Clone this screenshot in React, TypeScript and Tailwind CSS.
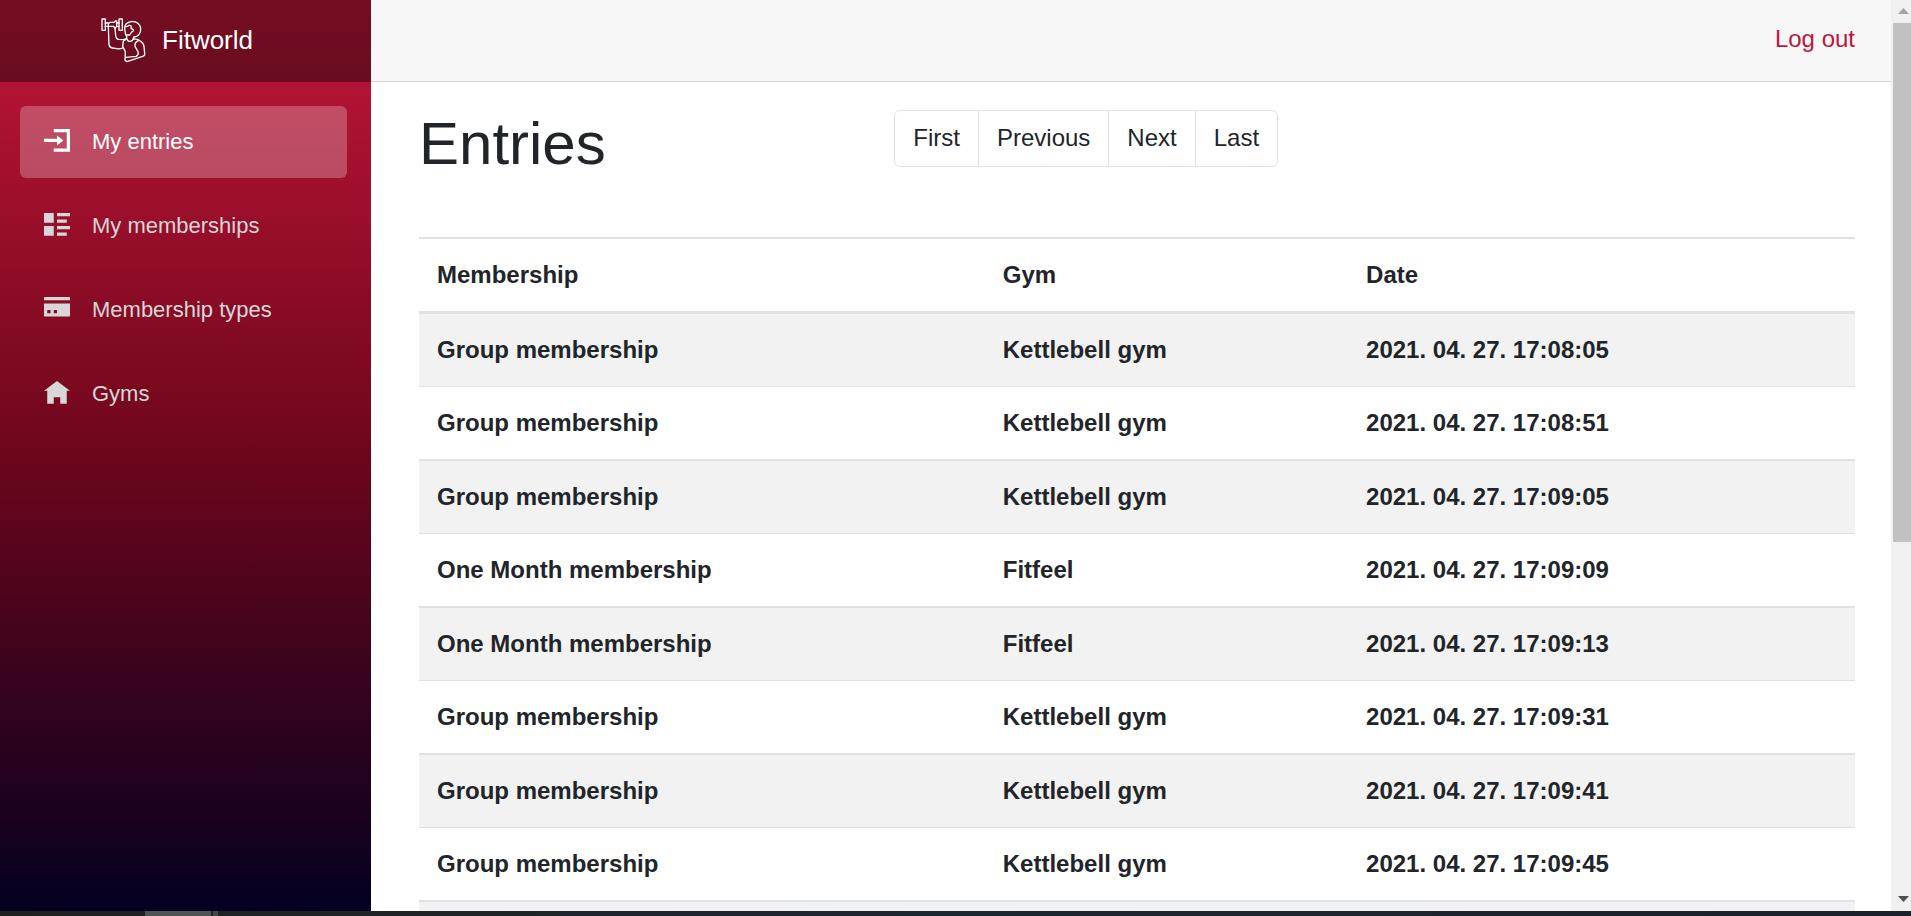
type Entry = { membership: string; gym: string; date: string };

const entries: Entry[] = [
  { membership: "Group membership", gym: "Kettlebell gym", date: "2021. 04. 27. 17:08:05" },
  { membership: "Group membership", gym: "Kettlebell gym", date: "2021. 04. 27. 17:08:51" },
  { membership: "Group membership", gym: "Kettlebell gym", date: "2021. 04. 27. 17:09:05" },
  { membership: "One Month membership", gym: "Fitfeel", date: "2021. 04. 27. 17:09:09" },
  { membership: "One Month membership", gym: "Fitfeel", date: "2021. 04. 27. 17:09:13" },
  { membership: "Group membership", gym: "Kettlebell gym", date: "2021. 04. 27. 17:09:31" },
  { membership: "Group membership", gym: "Kettlebell gym", date: "2021. 04. 27. 17:09:41" },
  { membership: "Group membership", gym: "Kettlebell gym", date: "2021. 04. 27. 17:09:45" },
];

const navItems = [
  { label: "My entries", icon: "M3 0v1h4v5h-4v1h5v-7h-5zm1 2v1h-4v1h4v1l2-1.5-2-1.5z" },
  {
    label: "My memberships",
    icon: "M0 0v3h3v-3h-3zm4 0v1h4v-1h-4zm0 2v1h3v-1h-3zm-4 2v3h3v-3h-3zm4 0v1h4v-1h-4zm0 2v1h3v-1h-3z",
  },
  {
    label: "Membership types",
    icon: "M.25 0c-.14 0-.25.11-.25.25v.75h8v-.75c0-.14-.11-.25-.25-.25h-7.5zm-.25 2v3.75c0 .14.11.25.25.25h7.5c.14 0 .25-.11.25-.25v-3.75h-8zm1 2h1v1h-1v-1zm2 0h1v1h-1v-1z",
  },
  { label: "Gyms", icon: "M4 0l-4 3h1v4h2v-2h2v2h2v-4.03l1 .03-4-3z" },
];

const pages = ["First", "Previous", "Next", "Last"];

function Logo() {
  return (
    <svg
      viewBox="30 33 144 144"
      className="size-12 shrink-0"
      fill="none"
      stroke="currentColor"
      strokeWidth="4"
      strokeLinejoin="round"
      strokeLinecap="round"
      aria-hidden="true"
    >
      <path d="M36 42h10v34h-10zM87 42h10v34h-10z" />
      <path d="M46 54h9M46 64h9M80 54h7M80 64h7" />
      <path d="M55 66v-10l5-4h12l4-4h4v16l-5 6l-4-6h-16" />
      <path d="M55 66l2 52q1 10 10 11l14 2q8 2 17-2" />
      <path d="M75 70l2 21q1 11 9 12l16 1l8-4v-8" />
      <path d="M104 72q-2-19 22-23q22 1 26 20q1 18-12 25l-8 2" />
      <path d="M104 72l3 18h12l6-9q7-2 4-8l-6-3q3-10-6-9q-7 6-11 3" />
      <path d="M132 96l-2 7q9-2 18 3q13 8 14 18l2 21q1 7-6 9l-47 16l-6-4l1-26l-8-16l2-16l8-5" />
      <path d="M110 100q3 11 12 9q7-3 8-9M146 106q-13 6-11 18l9 16q3 9-6 14l-31 3" />
    </svg>
  );
}

function Sidebar() {
  return (
    <aside className="w-[371px] shrink-0 bg-[linear-gradient(180deg,#c2163a_0%,#6d061b_50%,#030020_100%)]">
      <div className="flex h-[82px] items-center bg-black/40 pb-[2px] pl-[100px] text-white">
        <a href="#" className="flex items-center gap-[14px] text-[26px] leading-9">
          <Logo />
          Fitworld
        </a>
      </div>
      <nav className="flex flex-col gap-3 pt-6 pr-6 pl-5">
        {navItems.map((item, i) => (
          <a
            key={item.label}
            href="#"
            className={`flex h-[72px] items-center gap-[22px] rounded-md pl-6 text-[22px] ${
              i === 0 ? "bg-white/25 text-white" : "text-[#d7d7d7]"
            }`}
          >
            <svg viewBox="0 0 8 8" className="size-[26px] shrink-0" fill="currentColor" aria-hidden="true">
              <path d={item.icon} />
            </svg>
            {item.label}
          </a>
        ))}
      </nav>
    </aside>
  );
}

function EntriesTable() {
  return (
    <table className="w-full table-fixed border-separate border-spacing-0 text-left">
      <thead>
        <tr>
          <th className="w-[39.4%] border-t-2 border-b-3 border-[#dee2e6] p-[18px]">Membership</th>
          <th className="w-[25.3%] border-t-2 border-b-3 border-[#dee2e6] p-[18px]">Gym</th>
          <th className="border-t-2 border-b-3 border-[#dee2e6] p-[18px]">Date</th>
        </tr>
      </thead>
      <tbody className="font-bold [&_td]:border-[#dee2e6] [&_td]:p-[18px] [&_tr:nth-child(even)_td]:border-b-2 [&_tr:nth-child(odd)]:bg-[#f2f2f2] [&_tr:nth-child(odd)_td]:border-b">
        {entries.map((entry) => (
          <tr key={entry.date}>
            <td>{entry.membership}</td>
            <td>{entry.gym}</td>
            <td>{entry.date}</td>
          </tr>
        ))}
        <tr>
          <td />
          <td />
          <td />
        </tr>
      </tbody>
    </table>
  );
}

function Scrollbar() {
  return (
    <div className="flex w-5 shrink-0 flex-col items-end bg-[#f0f0f0]" aria-hidden="true">
      <svg viewBox="0 0 18 23" className="h-[23px] w-[18px] shrink-0" fill="#a3a3a3">
        <path d="M5 14L10.5 8L16 14z" />
      </svg>
      <div className="h-[57%] w-[18px] bg-[#c1c1c1]" />
      <svg viewBox="0 0 18 23" className="mt-auto h-[23px] w-[18px] shrink-0" fill="#505050">
        <path d="M5 8L10.5 14L16 8z" />
      </svg>
    </div>
  );
}

export default function App() {
  return (
    <div className="flex h-screen flex-col overflow-hidden bg-white font-['Liberation_Sans',Arial,sans-serif] text-2xl leading-9 text-[#212529]">
      <div className="flex min-h-0 flex-1">
        <Sidebar />
        <main className="min-w-0 flex-1 overflow-hidden">
          <header className="flex h-[82px] items-center justify-end border-b border-[#d6d5d5] bg-[#f7f7f7] pr-9 pb-1">
            <a href="#" className="text-[#c0143c]">
              Log out
            </a>
          </header>
          <div className="pt-7 pr-9 pl-12">
            <div className="flex h-[127px] items-start">
              <h1 className="w-[33.1%] text-[60px] leading-[68px]">Entries</h1>
              <div className="flex divide-x divide-[#dee2e6] rounded-md border border-[#dee2e6]">
                {pages.map((page) => (
                  <button key={page} type="button" className="h-[55px] px-[18px] pb-[2px]">
                    {page}
                  </button>
                ))}
              </div>
            </div>
            <EntriesTable />
          </div>
        </main>
        <Scrollbar />
      </div>
      <div className="flex h-[5px] shrink-0 bg-linear-to-r from-[#201f20] via-[#1d2730] to-[#1b202b]" aria-hidden="true">
        <div className="ml-[145px] w-[66px] bg-[#505254]" />
        <div className="ml-[2px] w-[5px] bg-[#444748]" />
      </div>
    </div>
  );
}
